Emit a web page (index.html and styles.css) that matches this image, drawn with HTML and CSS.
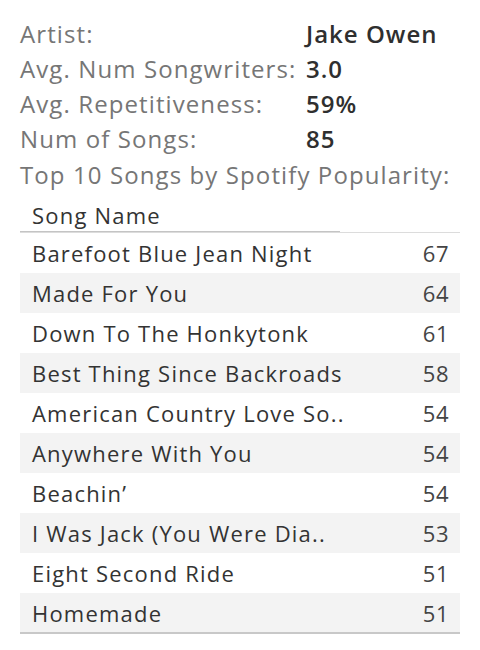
FILE: index.html
```html
<!DOCTYPE html>
<html>
<head>
<meta charset="utf-8">
<link rel="stylesheet" href="styles.css">
</head>
<body>
<div class="page">
  <div class="info">
    <div class="info-row"><span class="label">Artist:</span><span class="value">Jake Owen</span></div>
    <div class="info-row"><span class="label">Avg. Num Songwriters:</span><span class="value">3.0</span></div>
    <div class="info-row"><span class="label">Avg. Repetitiveness:</span><span class="value">59%</span></div>
    <div class="info-row"><span class="label">Num of Songs:</span><span class="value">85</span></div>
    <div class="info-title">Top 10 Songs by Spotify Popularity:</div>
  </div>
  <div class="table">
    <div class="thead"><span class="th">Song Name</span></div>
    <div class="row"><span class="name">Barefoot Blue Jean Night</span><span class="num">67</span></div>
    <div class="row alt"><span class="name">Made For You</span><span class="num">64</span></div>
    <div class="row"><span class="name">Down To The Honkytonk</span><span class="num">61</span></div>
    <div class="row alt"><span class="name">Best Thing Since Backroads</span><span class="num">58</span></div>
    <div class="row"><span class="name">American Country Love So..</span><span class="num">54</span></div>
    <div class="row alt"><span class="name">Anywhere With You</span><span class="num">54</span></div>
    <div class="row"><span class="name">Beachin’</span><span class="num">54</span></div>
    <div class="row alt"><span class="name">I Was Jack (You Were Dia..</span><span class="num">53</span></div>
    <div class="row"><span class="name">Eight Second Ride</span><span class="num">51</span></div>
    <div class="row alt"><span class="name">Homemade</span><span class="num">51</span></div>
  </div>
</div>
</body>
</html>
```
FILE: styles.css
```css
html, body {
  margin: 0;
  padding: 0;
  background: #ffffff;
}
body {
  font-family: "Open Sans", "Noto Sans", sans-serif;
  color: #333333;
}
.page {
  padding: 16px 20px 0 20px;
  width: 440px;
}
.info-row {
  display: flex;
  height: 35px;
  align-items: center;
  font-size: 24px;
  letter-spacing: 1.1px;
}
.label {
  width: 286px;
  color: #767676;
  white-space: nowrap;
}
.value {
  color: #2f2f2f;
  font-weight: 600;
  letter-spacing: 1px;
}
.info-title {
  height: 36px;
  display: flex;
  align-items: center;
  font-size: 24px;
  letter-spacing: 1.1px;
  color: #767676;
  white-space: nowrap;
}
.table {
  margin-top: 4px;
  width: 440px;
}
.thead {
  height: 34px;
  display: flex;
  align-items: flex-end;
  padding: 0 12px 2px 12px;
  font-size: 22px;
  letter-spacing: 1.2px;
  color: #333;
  border-bottom: 1px solid #dcdcdc;
  background-image: linear-gradient(#c4c4c4, #c4c4c4);
  background-size: 320px 1px;
  background-position: 0 100%;
  background-repeat: no-repeat;
}
.row {
  height: 40px;
  display: flex;
  align-items: center;
  justify-content: space-between;
  padding: 0 11px 0 12px;
  font-size: 22px;
  letter-spacing: 1.2px;
  color: #333;
}
.row.alt {
  background: #f3f3f3;
}
.row:last-child {
  border-bottom: 2px solid #c8c8c8;
  height: 39px;
}
.num {
  color: #444;
  letter-spacing: 0.5px;
}
```
